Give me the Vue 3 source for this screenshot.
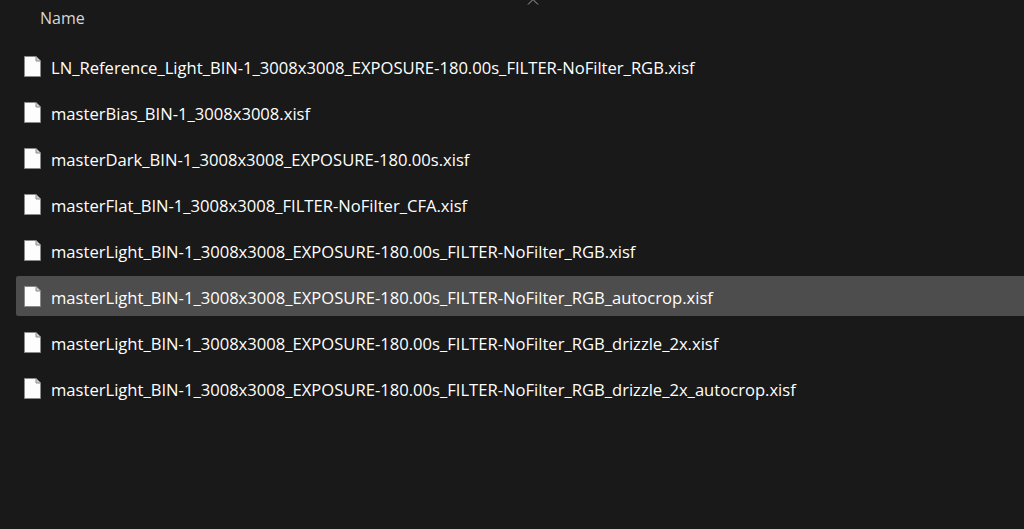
<template>
  <div class="explorer">
    <!-- sort arrow on the column header -->
    <svg class="sort-arrow" width="12" height="6" viewBox="0 0 12 6">
      <path d="M1 5.5 L6 0.5 L11 5.5" fill="none" stroke="#a6a6a6" stroke-width="1" />
    </svg>

    <div class="header">Name</div>

    <div class="list">
      <div
        v-for="(file, i) in files"
        :key="file"
        class="row"
        :class="{ selected: i === selectedIndex }"
      >
        <svg class="file-icon" width="17" height="21" viewBox="0 0 17 21">
          <path d="M0.5 0.5 H12 L16.5 5 V20.5 H0.5 Z" fill="#fdfdfd" stroke="#8a8a8a" stroke-width="1" />
          <path d="M12 0.5 V5 H16.5" fill="#d0d0d0" stroke="#8a8a8a" stroke-width="1" />
        </svg>
        <span class="name">{{ file }}</span>
      </div>
    </div>
  </div>
</template>

<script setup>
const selectedIndex = 5

const files = [
  'LN_Reference_Light_BIN-1_3008x3008_EXPOSURE-180.00s_FILTER-NoFilter_RGB.xisf',
  'masterBias_BIN-1_3008x3008.xisf',
  'masterDark_BIN-1_3008x3008_EXPOSURE-180.00s.xisf',
  'masterFlat_BIN-1_3008x3008_FILTER-NoFilter_CFA.xisf',
  'masterLight_BIN-1_3008x3008_EXPOSURE-180.00s_FILTER-NoFilter_RGB.xisf',
  'masterLight_BIN-1_3008x3008_EXPOSURE-180.00s_FILTER-NoFilter_RGB_autocrop.xisf',
  'masterLight_BIN-1_3008x3008_EXPOSURE-180.00s_FILTER-NoFilter_RGB_drizzle_2x.xisf',
  'masterLight_BIN-1_3008x3008_EXPOSURE-180.00s_FILTER-NoFilter_RGB_drizzle_2x_autocrop.xisf'
]
</script>

<style>
html,
body {
  margin: 0;
  background: #191919;
}
</style>

<style scoped>
.explorer {
  position: relative;
  width: 1024px;
  height: 529px;
  overflow: hidden;
  background: #191919;
  font-family: 'Open Sans', 'Noto Sans', sans-serif;
  color: #fff;
}

.sort-arrow {
  position: absolute;
  left: 527px;
  top: -1px;
}

.header {
  height: 46px;
  padding: 8px 0 0 40px;
  box-sizing: border-box;
  font-size: 16px;
  line-height: 20px;
  color: #d6d6d6;
}

.list {
  display: flex;
  flex-direction: column;
  gap: 6px;
  margin-left: 16px;
}

.row {
  display: flex;
  align-items: center;
  height: 40px;
  padding-left: 8px;
  box-sizing: border-box;
  border-radius: 2px 0 0 2px;
}

.row.selected {
  background: #4d4d4d;
}

.file-icon {
  flex: none;
  margin-right: 10px;
  margin-top: 1px;
}

.name {
  padding-top: 4px;
  font-size: 16.6px;
  line-height: 20px;
  white-space: nowrap;
}
</style>
